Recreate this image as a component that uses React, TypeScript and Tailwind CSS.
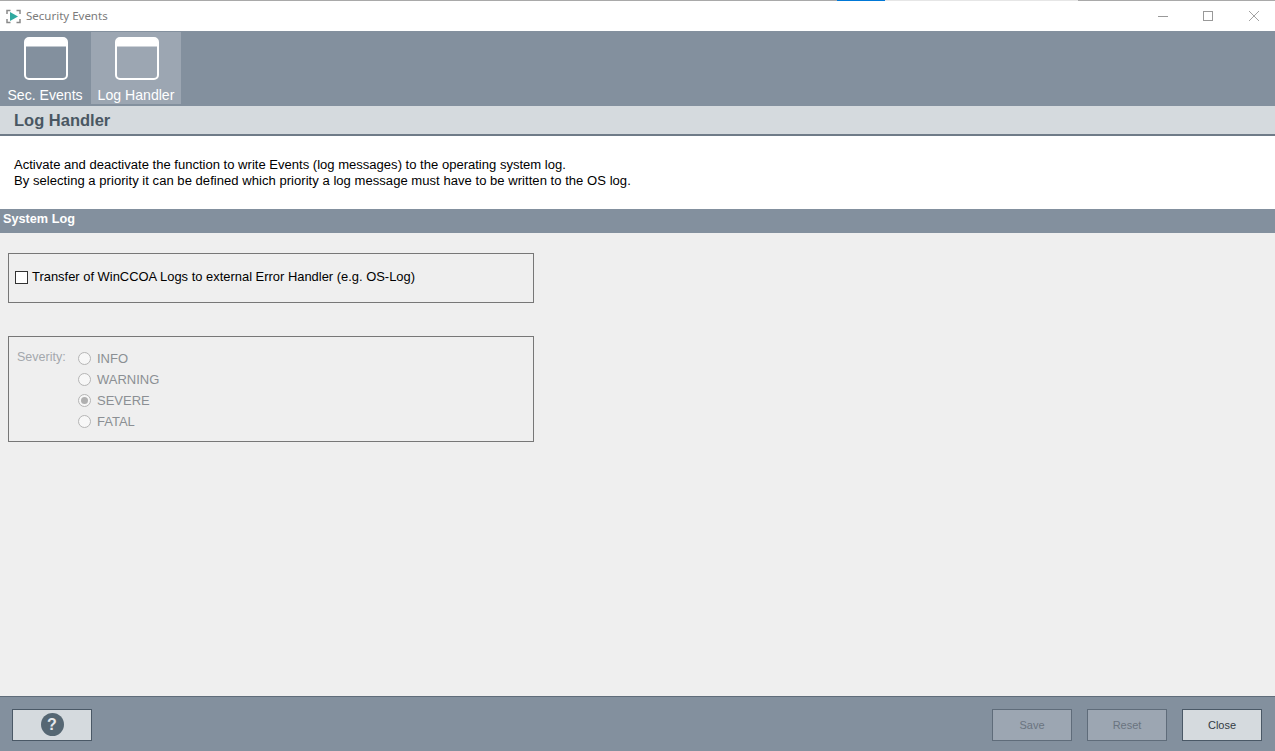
const font = "font-['Liberation_Sans',Arial,sans-serif]";

function WindowIcon() {
    return (
        <svg width="44" height="43" viewBox="0 0 44 43" fill="none" className="ml-[1px]">
            <rect x="1" y="1" width="42" height="41" rx="4" stroke="#ffffff" strokeWidth="2" />
            <path d="M1.5 9.5V5A3.5 3.5 0 0 1 5 1.500h34A3.500 3.500 0 0 1 42.500 5v4.500z" fill="#ffffff" />
        </svg>
    );
}

function ToolButton({ label, active }: { label: string; active?: boolean }) {
    return (
        <div className={`flex h-[72px] w-[90px] flex-col items-center pt-[5px] ${active ? "bg-[#9ca6b2]" : ""}`}>
            <WindowIcon />
            <span className="mt-[7px] whitespace-nowrap text-[14.1px] leading-[16px] text-white">{label}</span>
        </div>
    );
}

function Radio({ label, checked }: { label: string; checked?: boolean }) {
    return (
        <div className="flex h-[21px] items-center">
            <span className="flex h-[13px] w-[13px] items-center justify-center rounded-full border border-[#b5b5b5] bg-[#f7f7f7]">
                {checked && <span className="h-[7px] w-[7px] rounded-full bg-[#b0b0b0]" />}
            </span>
            <span className="ml-[6px] text-[13px] text-[#8b8f94]">{label}</span>
        </div>
    );
}

function FooterButton({ label, enabled }: { label: string; enabled?: boolean }) {
    return (
        <div
            className={`flex h-[32px] w-[80px] items-center justify-center border pt-px text-[11px] ${
                enabled
                    ? "border-[#4a5866] bg-[#d5dade] text-[#333b44]"
                    : "border-[#5f6c7a] bg-[#9ca6b2] text-[#6a7480]"
            }`}
        >
            {label}
        </div>
    );
}

export default function App() {
    return (
        <div className={`flex h-[751px] w-[1275px] flex-col overflow-hidden bg-[#efefef] ${font}`}>
            <div className="flex h-px shrink-0">
                <div className="w-[837px] bg-[#a9a9a9]" />
                <div className="w-[48px] bg-[#0078d7]" />
                <div className="w-[193px] bg-[#e6e6e6]" />
                <div className="flex-1 bg-[#a9a9a9]" />
            </div>

            {/* title bar */}
            <div className="flex h-[30px] shrink-0 items-center bg-white pl-[6px]">
                <svg width="15" height="15" viewBox="0 0 15 15" fill="none">
                    <path d="M1 5V1.500h3.500M10.500 1.500H14V5M14 10v3.500h-3.500M4.500 13.500H1V10" stroke="#8a8a8a" strokeWidth="1.500" />
                    <path d="M4 3l8 4.500L4 12z" fill="#2fa9a0" />
                </svg>
                <span className="ml-[5px] font-['Noto_Sans',sans-serif] text-[11.5px] text-[#7b7b7b]">Security Events</span>
                <div className="ml-auto mr-[16px] flex items-center">
                    <svg width="10" height="10" viewBox="0 0 10 10" className="mr-[35px]">
                        <path d="M0 5.500h10" stroke="#999999" />
                    </svg>
                    <svg width="10" height="10" viewBox="0 0 10 10" className="mr-[36px]">
                        <rect x="0.500" y="0.500" width="9" height="9" fill="none" stroke="#999999" />
                    </svg>
                    <svg width="10" height="10" viewBox="0 0 10 10">
                        <path d="M0 0l10 10M10 0L0 10" stroke="#999999" strokeWidth="0.900" />
                    </svg>
                </div>
            </div>

            {/* toolbar */}
            <div className="flex h-[75px] shrink-0 items-start gap-px bg-[#83909e] pt-px">
                <ToolButton label="Sec. Events" />
                <ToolButton label="Log Handler" active />
            </div>

            {/* page heading */}
            <div className="flex h-[30px] shrink-0 items-center border-b-2 border-[#6f7b88] bg-[#d5dade] pl-[14px] text-[16.5px] font-bold text-[#4a5763]">
                Log Handler
            </div>

            {/* description */}
            <div className="h-[73px] shrink-0 bg-white pl-[14px] pt-[21px] text-[13.05px] leading-[16px] text-black">
                <p>Activate and deactivate the function to write Events (log messages) to the operating system log.</p>
                <p className="tracking-[0.03px]">By selecting a priority it can be defined which priority a log message must have to be written to the OS log.</p>
            </div>

            <div className="flex h-[24px] shrink-0 items-start bg-[#83909e] pl-[3px] pt-[3px] text-[12.7px] font-bold leading-[15px] text-white">
                System Log
            </div>

            {/* content */}
            <div className="flex flex-1 flex-col pl-[8px] pt-[20px]">
                <div className="flex h-[50px] w-[526px] items-center border border-[#777777] pb-[2px] pl-[6px]">
                    <span className="h-[13px] w-[13px] border border-[#333333] bg-white" />
                    <span className="ml-[4px] text-[12.93px] text-black">Transfer of WinCCOA Logs to external Error Handler (e.g. OS-Log)</span>
                </div>
                <div className="mt-[33px] flex h-[106px] w-[526px] items-start border border-[#777777] pl-[8px] pt-[11px]">
                    <span className="w-[61px] text-[12.5px] text-[#a4a8ad]">Severity:</span>
                    <div className="flex flex-col">
                        <Radio label="INFO" />
                        <Radio label="WARNING" />
                        <Radio label="SEVERE" checked />
                        <Radio label="FATAL" />
                    </div>
                </div>
            </div>

            {/* footer */}
            <div className="flex h-[55px] shrink-0 items-center border-t border-[#5f6c7a] bg-[#83909e] pl-[12px] pr-[13px] pt-[1px]">
                <div className="flex h-[32px] w-[80px] items-center justify-center border border-[#4a5866] bg-[#d5dade]">
                    <span className="flex h-[23px] w-[23px] items-center justify-center rounded-full bg-[#566773] text-[16px] font-bold text-[#e6e9ec]">?</span>
                </div>
                <div className="ml-auto flex gap-[15px]">
                    <FooterButton label="Save" />
                    <FooterButton label="Reset" />
                    <FooterButton label="Close" enabled />
                </div>
            </div>
        </div>
    );
}
